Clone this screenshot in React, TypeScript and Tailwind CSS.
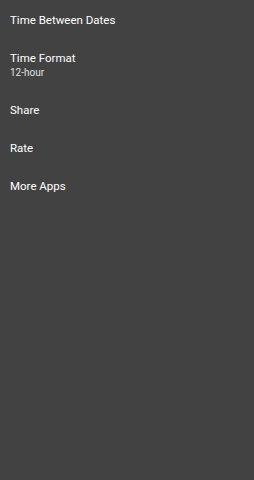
export default function App() {
  const items = [
    { title: "Time Between Dates" },
    { title: "Time Format", sub: "12-hour" },
    { title: "Share" },
    { title: "Rate" },
    { title: "More Apps" },
  ]
  return (
    <div className="min-h-[480px] w-full bg-[#424242] pt-[1px] font-['Roboto',sans-serif] text-white">
      {items.map((it) => (
        <div
          key={it.title}
          className={`flex flex-col justify-center px-[10px] ${it.sub ? "h-[52px]" : "h-[38px]"}`}
        >
          <div className="text-[11.5px] leading-[15px]">{it.title}</div>
          {it.sub && <div className="text-[10px] leading-[13px] text-[#e0e0e0]">{it.sub}</div>}
        </div>
      ))}
    </div>
  )
}
